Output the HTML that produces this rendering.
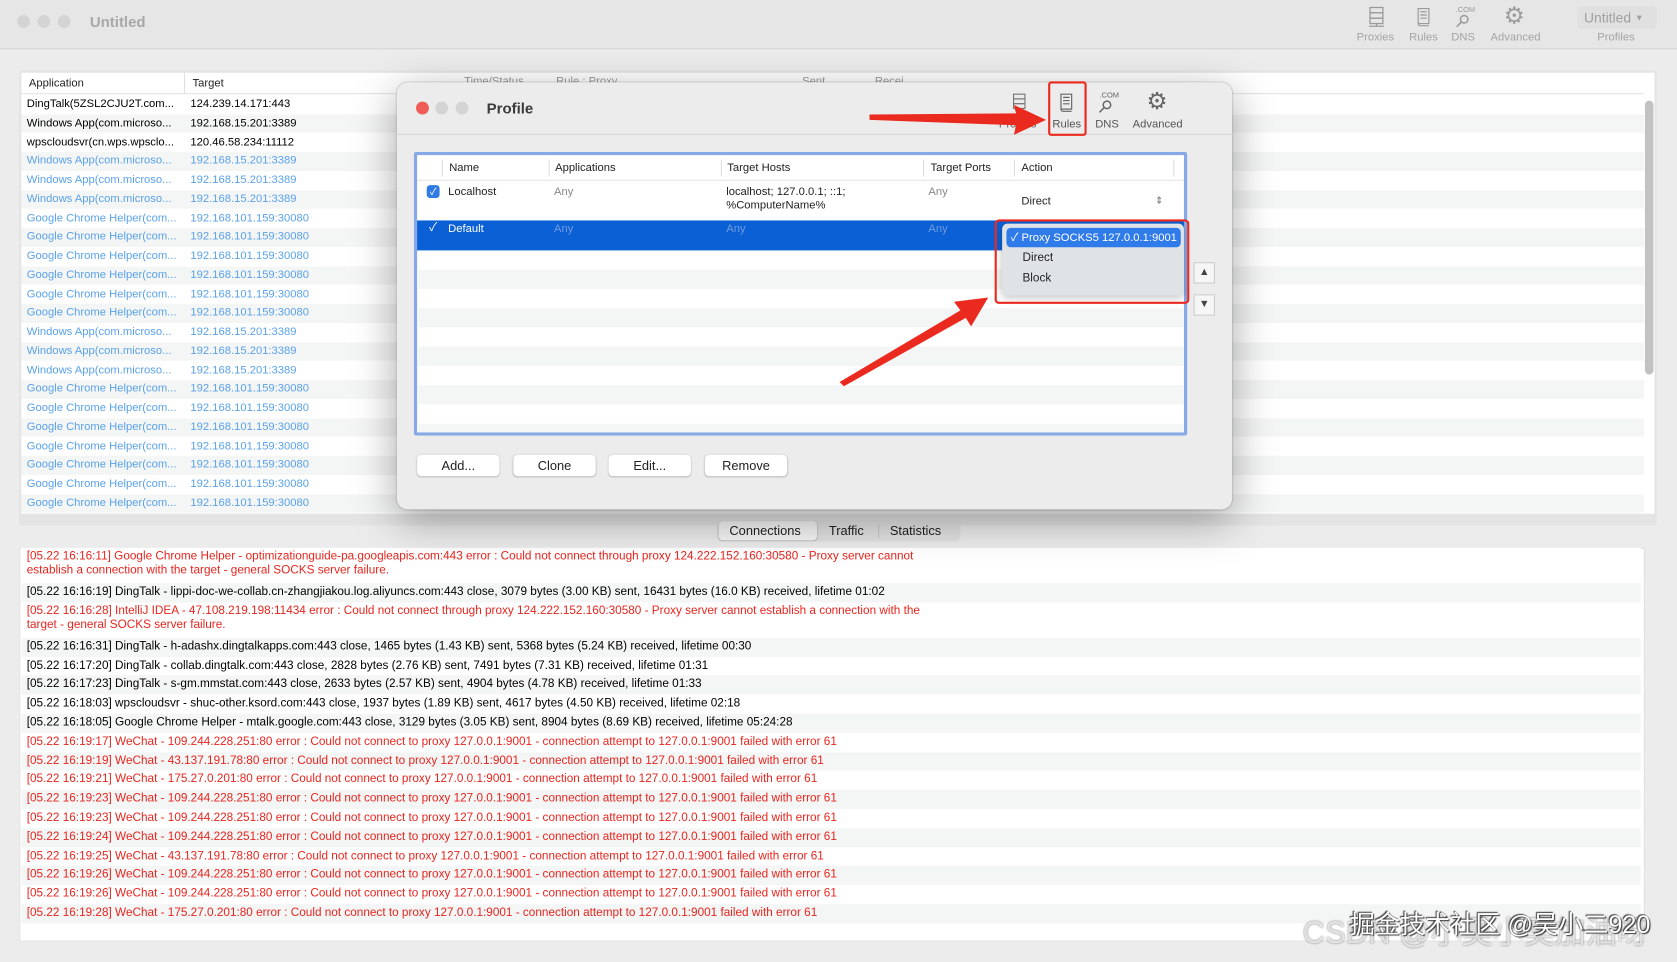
<!DOCTYPE html>
<html><head><meta charset="utf-8">
<style>
*{margin:0;padding:0;box-sizing:border-box}
html,body{width:1677px;height:962px;overflow:hidden;background:#ececec}
body{font-family:"Liberation Sans","Noto Sans CJK SC",sans-serif}
#w{position:absolute;left:0;top:0;width:1568px;height:899px;transform-origin:0 0;transform:scale(1.06952,1.0701);background:#ececec}
.a{position:absolute;white-space:nowrap}
.tl{position:absolute;width:12px;height:12px;border-radius:50%;background:#d4d4d4}
.ic{position:absolute;font-size:10.5px;color:#a4a4a4;text-align:center}
.row{position:absolute;left:20px;width:1517px;height:17.7px;font-size:10.5px;line-height:17.7px;white-space:nowrap}
.row span{position:absolute}
.blue{color:#5aa2ea}
.lg{position:absolute;left:20px;width:1514px;font-size:11px;line-height:17.7px;white-space:nowrap;padding-left:5px}
.r{color:#e8251e}
.btn{position:absolute;top:425px;height:20px;width:77px;background:#fff;border-radius:4px;box-shadow:0 0.5px 1.5px rgba(0,0,0,.3);font-size:12px;text-align:center;line-height:20px;color:#222}
.th{position:absolute;top:151px;font-size:10.5px;color:#222}
.sep{position:absolute;top:149px;width:1px;height:16px;background:#ddd}
</style></head><body><div id="w">
<div class="a" style="left:0;top:0;width:1568px;height:46px;background:#e6e6e6;border-bottom:1px solid #d6d6d6"></div>
<div class="tl" style="left:16px;top:14px"></div><div class="tl" style="left:35px;top:14px"></div><div class="tl" style="left:54px;top:14px"></div>
<div class="a" style="left:84px;top:12px;font-size:14px;font-weight:bold;color:#a8a8a8">Untitled</div>
<svg class="a" style="left:1278px;top:6px" width="18" height="20" viewBox="0 0 18 20" fill="none" stroke="#9a9a9a" stroke-width="1.2"><rect x="3" y="1" width="12" height="5"/><rect x="3" y="6" width="12" height="5"/><rect x="3" y="11" width="12" height="5"/><path d="M9 16v2M2 18.5h14"/></svg>
<svg class="a" style="left:1323px;top:6px" width="16" height="20" viewBox="0 0 16 20" fill="none" stroke="#9a9a9a" stroke-width="1.1"><path d="M3 2h10v14H3zM5 5h6M5 8h6M5 11h6M3 16c0 2 2 2 2 2h8"/></svg>
<div class="a" style="left:1361px;top:6px;font-size:7px;color:#9a9a9a">.COM</div>
<svg class="a" style="left:1360px;top:13px" width="14" height="14" viewBox="0 0 14 14" fill="none" stroke="#9a9a9a" stroke-width="1.4"><circle cx="9" cy="5" r="3.5"/><path d="M6.5 7.5L2 12"/></svg>
<div class="a" style="left:1406px;top:4px;font-size:22px;color:#9c9c9c;line-height:22px">⚙</div>
<div class="ic" style="left:1266px;top:29px;width:40px">Proxies</div>
<div class="ic" style="left:1313px;top:29px;width:36px">Rules</div>
<div class="ic" style="left:1353px;top:29px;width:30px">DNS</div>
<div class="ic" style="left:1390px;top:29px;width:54px">Advanced</div>
<div class="a" style="left:1475px;top:6px;width:74px;height:21px;background:#e0e0e0;border-radius:4px;font-size:13px;color:#a0a0a0;padding:3px 0 0 6px">Untitled <span style="font-size:8px;position:relative;top:-2px">▼</span></div>
<div class="ic" style="left:1480px;top:29px;width:62px">Profiles</div>

<div class="a" style="left:18px;top:66px;width:1531px;height:425px;background:#e4e4e4;border-radius:3px"></div>
<div class="a" style="left:20px;top:68px;width:1527px;height:412px;background:#fff"></div>
<div class="a" style="left:20px;top:68px;width:1517px;height:20px;border-bottom:1px solid #e4e4e4;font-size:10.5px;color:#222">
<span class="a" style="left:7px;top:4px">Application</span><span class="a" style="left:152px;top:0;width:1px;height:20px;background:#e0e0e0"></span><span class="a" style="left:160px;top:4px">Target</span>
<span class="a" style="left:414px;top:2px;color:#999">Time/Status</span><span class="a" style="left:500px;top:2px;color:#999">Rule : Proxy</span><span class="a" style="left:730px;top:2px;color:#999">Sent</span><span class="a" style="left:798px;top:2px;color:#999">Recei</span></div>
<div class="a" style="left:1538px;top:94px;width:8px;height:256px;background:#c2c2c2;border-radius:4px"></div>
<div id="rows"></div>

<div class="a" style="left:670px;top:486px;width:228px;height:20px;background:#e2e2e2;border-radius:5px"></div>
<div class="a" style="left:672px;top:487px;width:92px;height:18px;background:#f6f6f6;border-radius:4px;box-shadow:0 0.5px 1px rgba(0,0,0,.25)"></div>
<div class="a" style="left:682px;top:489px;font-size:12px;color:#222">Connections</div>
<div class="a" style="left:775px;top:489px;font-size:12px;color:#222">Traffic</div>
<div class="a" style="left:821px;top:490px;width:1px;height:13px;background:#ccc"></div>
<div class="a" style="left:832px;top:489px;font-size:12px;color:#222">Statistics</div>

<div class="a" style="left:18px;top:512px;width:1520px;height:368px;background:#fff;border:1px solid #e0e0e0"></div>
<div id="logs"></div>

<div class="a" style="left:371px;top:77px;width:781px;height:399px;background:#ececec;border-radius:10px;box-shadow:0 10px 40px rgba(0,0,0,.35),0 0 0 1px rgba(0,0,0,.12)"></div>
<div class="a" style="left:371px;top:125px;width:781px;height:1px;background:#d4d4d4"></div>
<div class="tl" style="left:389px;top:95px;background:#ee5e57"></div><div class="tl" style="left:407px;top:95px"></div><div class="tl" style="left:426px;top:95px"></div>
<div class="a" style="left:455px;top:93px;font-size:14px;font-weight:bold;color:#3a3a3a">Profile</div>
<svg class="a" style="left:945px;top:86px" width="16" height="20" viewBox="0 0 18 20" fill="none" stroke="#777" stroke-width="1.2"><rect x="3" y="1" width="12" height="5"/><rect x="3" y="6" width="12" height="5"/><rect x="3" y="11" width="12" height="5"/></svg>
<div class="a" style="left:934px;top:110px;font-size:10.5px;color:#666">Proxies</div>
<svg class="a" style="left:989px;top:86px" width="16" height="20" viewBox="0 0 16 20" fill="none" stroke="#666" stroke-width="1.1"><path d="M3 2h10v14H3zM5 5h6M5 8h6M5 11h6M3 16c0 2 2 2 2 2h8"/></svg>
<div class="a" style="left:984px;top:110px;font-size:10.5px;color:#555">Rules</div>
<div class="a" style="left:1028px;top:86px;font-size:7px;color:#666">.COM</div>
<svg class="a" style="left:1026px;top:93px" width="14" height="14" viewBox="0 0 14 14" fill="none" stroke="#666" stroke-width="1.4"><circle cx="9" cy="5" r="3.5"/><path d="M6.5 7.5L2 12"/></svg>
<div class="a" style="left:1024px;top:110px;font-size:10.5px;color:#555">DNS</div>
<div class="a" style="left:1072px;top:84px;font-size:22px;color:#666;line-height:22px">⚙</div>
<div class="a" style="left:1059px;top:110px;font-size:10.5px;color:#555">Advanced</div>
<div class="a" style="left:980px;top:76px;width:36px;height:51px;border:2.5px solid #ea2a1f;border-radius:3px"></div>

<div class="a" style="left:387px;top:142px;width:723px;height:265px;background:#fff;border:3px solid #86a8e6;border-radius:2px"></div>
<div class="a" style="left:390px;top:168px;width:717px;height:1px;background:#e4e4e4"></div>
<div class="sep" style="left:413px"></div><div class="sep" style="left:513px"></div><div class="sep" style="left:674px"></div><div class="sep" style="left:863px"></div><div class="sep" style="left:948px"></div><div class="sep" style="left:1097px"></div>
<div class="th" style="left:420px">Name</div><div class="th" style="left:519px">Applications</div><div class="th" style="left:680px">Target Hosts</div><div class="th" style="left:870px">Target Ports</div><div class="th" style="left:955px">Action</div>
<div class="a" style="left:399px;top:173px;width:12px;height:12px;background:#2d7be3;border-radius:3px;color:#fff;font-size:9px;text-align:center;line-height:12px">✓</div>
<div class="a" style="left:419px;top:173px;font-size:10.5px;color:#222">Localhost</div>
<div class="a" style="left:518px;top:173px;font-size:10.5px;color:#888">Any</div>
<div class="a" style="left:679px;top:173px;font-size:10.5px;color:#222;line-height:13px">localhost; 127.0.0.1; ::1;<br>%ComputerName%</div>
<div class="a" style="left:868px;top:173px;font-size:10.5px;color:#888">Any</div>
<div class="a" style="left:955px;top:182px;font-size:10.5px;color:#222">Direct</div>
<div class="a" style="left:1080px;top:182px;font-size:9px;color:#666">⇕</div>
<div class="a" style="left:390px;top:206px;width:717px;height:28px;background:#0c60d5"></div>
<div class="a" style="left:399px;top:207px;width:12px;height:12px;color:#fff;font-size:11px;text-align:center;line-height:12px">✓</div>
<div class="a" style="left:419px;top:208px;font-size:10.5px;color:#fff">Default</div>
<div class="a" style="left:518px;top:208px;font-size:10.5px;color:#6f9be0">Any</div>
<div class="a" style="left:679px;top:208px;font-size:10.5px;color:#6f9be0">Any</div>
<div class="a" style="left:868px;top:208px;font-size:10.5px;color:#6f9be0">Any</div>
<div class="a" style="left:390px;top:252px;width:717px;height:18px;background:#f4f5f5"></div>
<div class="a" style="left:390px;top:288px;width:717px;height:18px;background:#f4f5f5"></div>
<div class="a" style="left:390px;top:324px;width:717px;height:18px;background:#f4f5f5"></div>
<div class="a" style="left:390px;top:360px;width:717px;height:18px;background:#f4f5f5"></div>
<div class="a" style="left:390px;top:396px;width:717px;height:8px;background:#f4f5f5"></div>
<div class="a" style="left:937px;top:209px;width:170px;height:67px;background:#dfe3e6;border-radius:5px;box-shadow:0 2px 8px rgba(0,0,0,.25)"></div>
<div class="a" style="left:941px;top:213px;width:163px;height:18px;background:#2f7bea;border-radius:4px;color:#fff;font-size:10.5px;line-height:18px;padding-left:4px">✓ Proxy SOCKS5 127.0.0.1:9001</div>
<div class="a" style="left:956px;top:235px;font-size:11px;color:#222">Direct</div>
<div class="a" style="left:956px;top:254px;font-size:11px;color:#222">Block</div>
<div class="a" style="left:930px;top:205px;width:182px;height:79px;border:2.5px solid #ea2a1f;border-radius:4px"></div>
<div class="a" style="left:1116px;top:245px;width:20px;height:20px;border:1px solid #ccc;background:#f6f6f6;font-size:10px;text-align:center;line-height:18px;color:#444">▲</div>
<div class="a" style="left:1116px;top:275px;width:20px;height:20px;border:1px solid #ccc;background:#f6f6f6;font-size:10px;text-align:center;line-height:18px;color:#444">▼</div>
<div class="btn" style="left:390px">Add...</div><div class="btn" style="left:480px">Clone</div><div class="btn" style="left:569px">Edit...</div><div class="btn" style="left:659px">Remove</div>
<svg class="a" style="left:0;top:0" width="1568" height="899"><g fill="#ea2a1f">
<polygon points="813,107 950,106 948,98 978,112 948,126 950,117 813,112"/>
<polygon points="785,357 898,290 892,282 924,278 908,305 903,297 789,361"/></g></svg>

<div class="a" style="left:1218px;top:848px;font-size:29px;color:rgba(255,255,255,.7);text-shadow:0 0 2px #777">CSDN @小吴小吴加油呀</div>
<div class="a" style="left:1262px;top:845px;font-size:23.5px;color:#fff;text-shadow:1px 1px 1px #333,-1px -1px 1px #333">掘金技术社区 @吴小二920</div>
</div>
<script>
var apps=[["DingTalk(5ZSL2CJU2T.com...","124.239.14.171:443",0],["Windows App(com.microso...","192.168.15.201:3389",0],["wpscloudsvr(cn.wps.wpsclo...","120.46.58.234:11112",0]];
var W=["Windows App(com.microso...","192.168.15.201:3389",1],G=["Google Chrome Helper(com...","192.168.101.159:30080",1];
apps.push(W,W,W,G,G,G,G,G,G,W,W,W,G,G,G,G,G,G,G);
var h="";apps.forEach(function(a,i){var y=89+i*17.75;h+='<div class="row '+(a[2]?'blue':'')+'" style="top:'+y+'px;background:'+(i%2?'#f4f5f5':'#fff')+'"><span style="left:5px">'+a[0]+'</span><span style="left:158px">'+a[1]+'</span></div>';});
document.getElementById('rows').innerHTML=h;
var L=[[1,"[05.22 16:16:11] Google Chrome Helper - optimizationguide-pa.googleapis.com:443 error : Could not connect through proxy 124.222.152.160:30580 - Proxy server cannot<br>establish a connection with the target - general SOCKS server failure."],
[0,"[05.22 16:16:19] DingTalk - lippi-doc-we-collab.cn-zhangjiakou.log.aliyuncs.com:443 close, 3079 bytes (3.00 KB) sent, 16431 bytes (16.0 KB) received, lifetime 01:02"],
[1,"[05.22 16:16:28] IntelliJ IDEA - 47.108.219.198:11434 error : Could not connect through proxy 124.222.152.160:30580 - Proxy server cannot establish a connection with the<br>target - general SOCKS server failure."],
[0,"[05.22 16:16:31] DingTalk - h-adashx.dingtalkapps.com:443 close, 1465 bytes (1.43 KB) sent, 5368 bytes (5.24 KB) received, lifetime 00:30"],
[0,"[05.22 16:17:20] DingTalk - collab.dingtalk.com:443 close, 2828 bytes (2.76 KB) sent, 7491 bytes (7.31 KB) received, lifetime 01:31"],
[0,"[05.22 16:17:23] DingTalk - s-gm.mmstat.com:443 close, 2633 bytes (2.57 KB) sent, 4904 bytes (4.78 KB) received, lifetime 01:33"],
[0,"[05.22 16:18:03] wpscloudsvr - shuc-other.ksord.com:443 close, 1937 bytes (1.89 KB) sent, 4617 bytes (4.50 KB) received, lifetime 02:18"],
[0,"[05.22 16:18:05] Google Chrome Helper - mtalk.google.com:443 close, 3129 bytes (3.05 KB) sent, 8904 bytes (8.69 KB) received, lifetime 05:24:28"]];
var wc=[["17","109.244.228.251"],["19","43.137.191.78"],["21","175.27.0.201"],["23","109.244.228.251"],["23","109.244.228.251"],["24","109.244.228.251"],["25","43.137.191.78"],["26","109.244.228.251"],["26","109.244.228.251"],["28","175.27.0.201"]];
wc.forEach(function(w){L.push([1,"[05.22 16:19:"+w[0]+"] WeChat - "+w[1]+":80 error : Could not connect to proxy 127.0.0.1:9001 - connection attempt to 127.0.0.1:9001 failed with error 61"]);});
var y=512,s="",k=0;L.forEach(function(l){var n=l[1].indexOf('<br>')>=0?2:1;var hh=n==2?33:17.8;s+='<div class="lg '+(l[0]?'r':'')+'" style="top:'+y+'px;height:'+hh+'px;line-height:'+(n==2?'13px':'17.8px')+';padding-top:'+(n==2?'2px':'0')+';background:'+(k%2?'#f4f5f5':'#fff')+'">'+l[1]+'</div>';y+=hh;k++;});
document.getElementById('logs').innerHTML=s;
</script>
</body></html>
